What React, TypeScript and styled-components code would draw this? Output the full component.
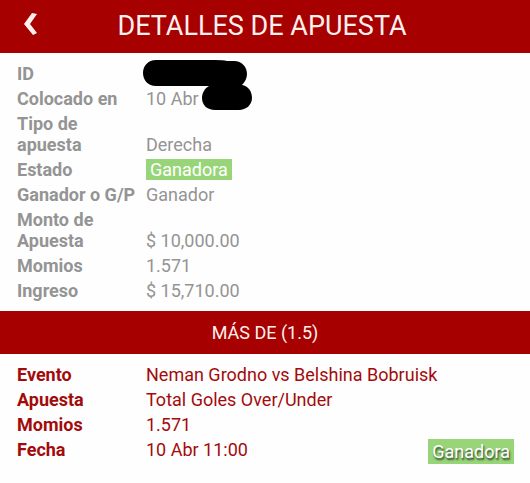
import React from 'react';
import styled, { createGlobalStyle } from 'styled-components';

const GlobalStyle = createGlobalStyle`
  * {
    box-sizing: border-box;
  }

  body {
    margin: 0;
    background: #fefefe;
    font-family: Roboto, 'Liberation Sans', sans-serif;
    font-size: 18px;
    line-height: 21px;
  }
`;

const Header = styled.header`
  display: grid;
  grid-template-columns: 62px 1fr 68px;
  align-items: start;
  background: #a60000;
  color: #fff0ee;
`;

const BackButton = styled.button`
  display: flex;
  align-items: center;
  justify-content: center;
  height: 47px;
  padding: 0;
  border: none;
  background: none;
  color: inherit;
  cursor: pointer;
`;

const Title = styled.h1`
  margin: 0;
  font-size: 27px;
  font-weight: 400;
  line-height: 53px;
  text-align: center;
  white-space: nowrap;
`;

const SectionTitle = styled.h2`
  margin: 0;
  background: #a60000;
  color: #fff0ee;
  font-size: 18px;
  font-weight: 400;
  line-height: 43px;
  text-align: center;
`;

const Details = styled.dl<{ $color: string }>`
  display: flex;
  flex-direction: column;
  gap: 4px;
  margin: 0;
  padding: 10px 16px 10px 17px;
  color: ${props => props.$color};
`;

const Row = styled.div`
  display: flex;
  align-items: flex-end;
`;

const Label = styled.dt`
  flex: 0 0 129px;
  padding-right: 10px;
  font-weight: 700;
`;

const Value = styled.dd`
  position: relative;
  flex: 1;
  display: flex;
  align-items: flex-start;
  justify-content: space-between;
  min-height: 21px;
  margin: 0;
`;

const Badge = styled.span`
  padding: 0 4px;
  background: #98d578;
  color: #fff;
`;

const ResultBadge = styled(Badge)`
  margin-bottom: -4px;
  padding: 2px 4px;
  text-shadow: 1px 2px 2px rgba(0, 0, 0, 0.7);
`;

const Redaction = styled.svg`
  position: absolute;
  top: -3px;
  left: -3px;
`;

const HiddenData = () => (
  <Redaction width="110" height="52" viewBox="0 0 110 52" aria-hidden="true">
    <path d="M13 0H72Q80 0 84 1H91C99 1 104 7 104 14C104 18 102 22 99 25C105 26 109 31 109 38C109 45 103 50 96 50H72C64 50 59 45 59 38C59 33 62 28 66 26H13C5 26 0 20 0 13S5 0 13 0Z" />
  </Redaction>
);

interface Detail {
  label: string;
  value: React.ReactNode;
}

const betDetails: Detail[] = [
  { label: 'ID', value: <HiddenData /> },
  { label: 'Colocado en', value: '10 Abr' },
  { label: 'Tipo de apuesta', value: 'Derecha' },
  { label: 'Estado', value: <Badge>Ganadora</Badge> },
  { label: 'Ganador o G/P', value: 'Ganador' },
  { label: 'Monto de Apuesta', value: '$ 10,000.00' },
  { label: 'Momios', value: '1.571' },
  { label: 'Ingreso', value: '$ 15,710.00' },
];

const eventDetails: Detail[] = [
  { label: 'Evento', value: 'Neman Grodno vs Belshina Bobruisk' },
  { label: 'Apuesta', value: 'Total Goles Over/Under' },
  { label: 'Momios', value: '1.571' },
  {
    label: 'Fecha',
    value: (
      <>
        <span>10 Abr 11:00</span>
        <ResultBadge>Ganadora</ResultBadge>
      </>
    ),
  },
];

const DetailList: React.FC<{ items: Detail[]; color: string }> = ({ items, color }) => (
  <Details $color={color}>
    {items.map(item => (
      <Row key={item.label}>
        <Label>{item.label}</Label>
        <Value>{item.value}</Value>
      </Row>
    ))}
  </Details>
);

const App: React.FC = () => {
  return (
    <>
      <GlobalStyle />
      <Header>
        <BackButton type="button" aria-label="Volver">
          <svg width="14" height="22" viewBox="0 0 14 22" fill="currentColor" aria-hidden="true">
            <path d="M8 0L13 1L6 11L13 20L9 22L0 11Z" />
          </svg>
        </BackButton>
        <Title>DETALLES DE APUESTA</Title>
      </Header>
      <main>
        <DetailList items={betDetails} color="#949494" />
        <SectionTitle>MÁS DE (1.5)</SectionTitle>
        <DetailList items={eventDetails} color="#a30b0b" />
      </main>
    </>
  );
};

export default App;
